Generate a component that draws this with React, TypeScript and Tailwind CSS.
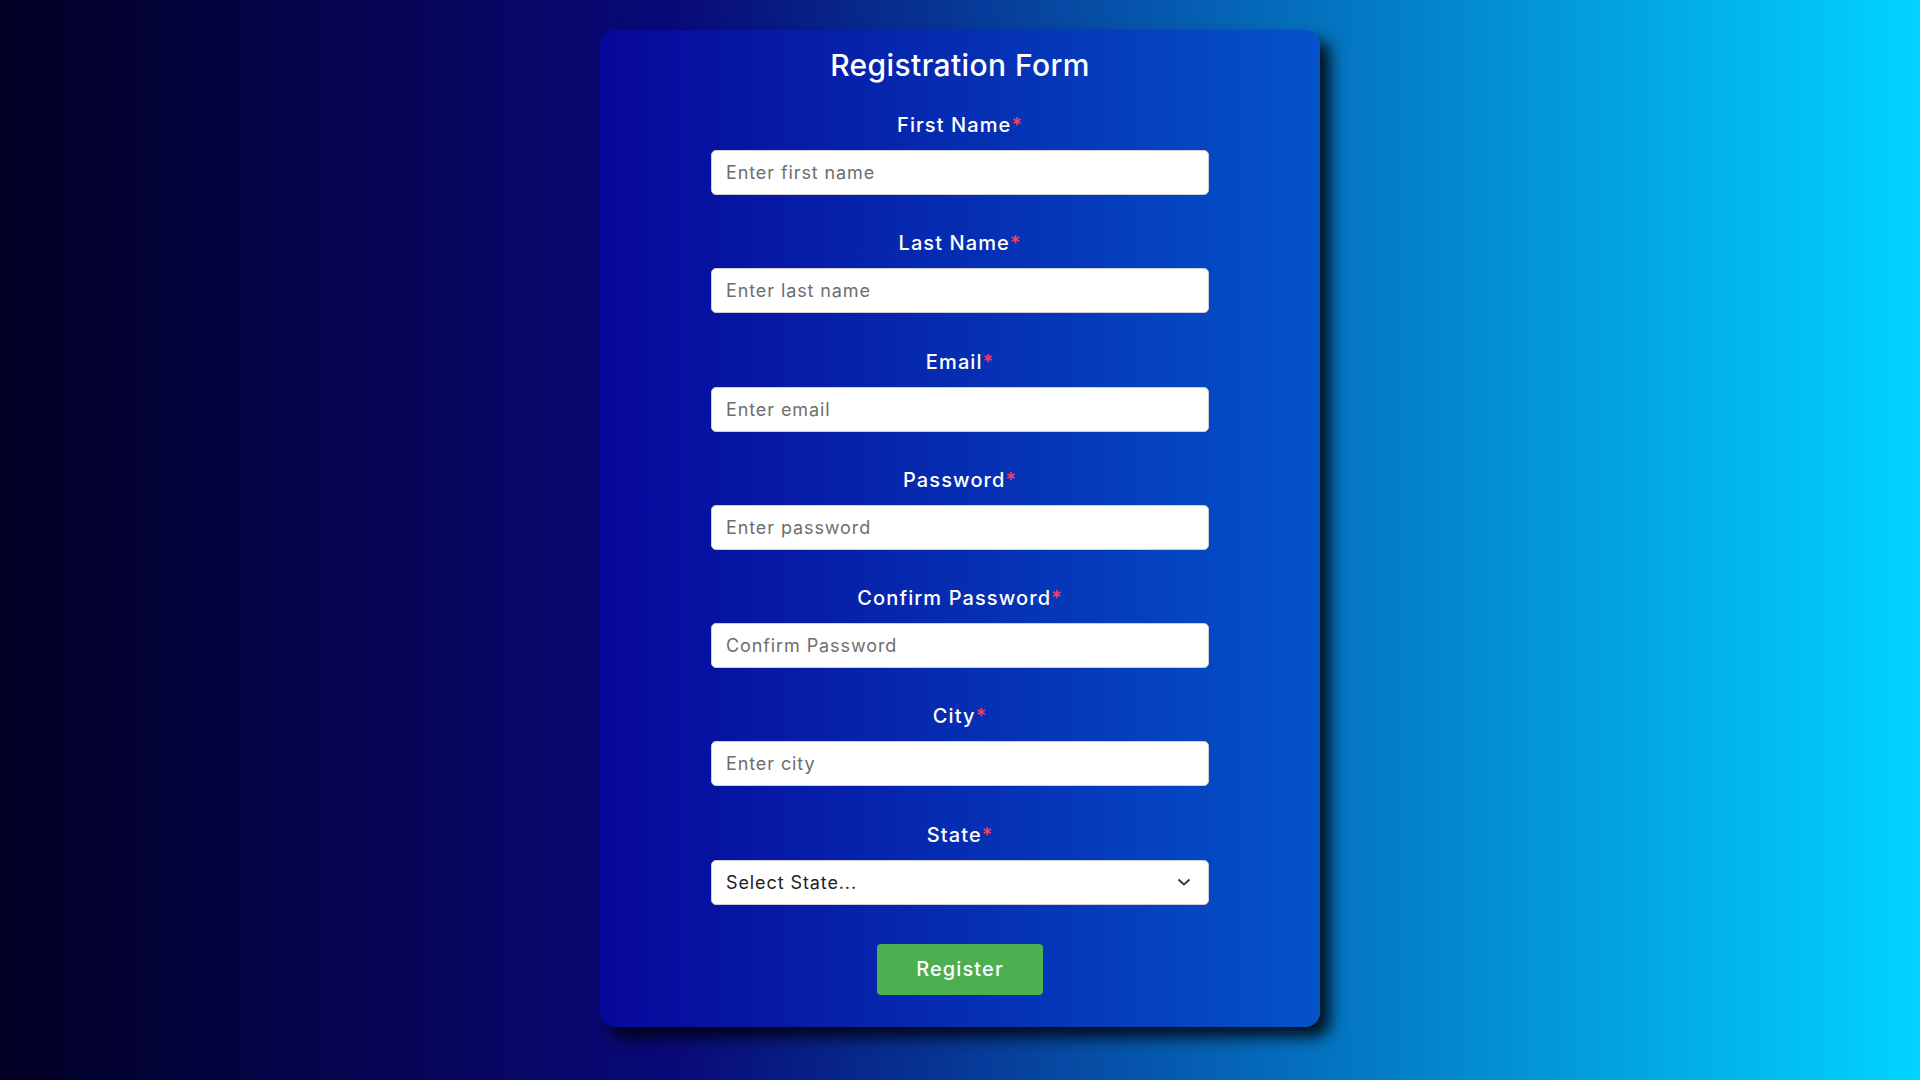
import React from "react";

const fields = [
  { label: "First Name", placeholder: "Enter first name", type: "text" },
  { label: "Last Name", placeholder: "Enter last name", type: "text" },
  { label: "Email", placeholder: "Enter email", type: "email" },
  { label: "Password", placeholder: "Enter password", type: "password" },
  { label: "Confirm Password", placeholder: "Confirm Password", type: "password" },
  { label: "City", placeholder: "Enter city", type: "text" },
];

const Label = ({ text }: { text: string }) => (
  <label className="block text-center text-[20px] leading-[30px] font-medium tracking-[1.1px] text-white">
    {text}
    <span className="text-[#ff3d5e]">*</span>
  </label>
);

export default function App() {
  return (
    <div
      className="min-h-screen w-full flex justify-center items-start pt-[30px] bg-[linear-gradient(90deg,#020024_0%,#090979_35%,#00d4ff_100%)]"
      style={{ fontFamily: "Inter, 'Open Sans', sans-serif" }}
    >
      {/* Card */}
      <form
        className="w-[720px] h-[997px] rounded-[15px] pt-[13px] flex flex-col items-center bg-[linear-gradient(90deg,#07079a_0%,#0453ca_100%)] shadow-[10px_10px_15px_rgba(0,0,0,0.85)]"
        onSubmit={(e) => e.preventDefault()}
      >
        <h2 className="text-[30px] leading-[45px] font-medium tracking-[0.4px] text-white mb-[22px]">
          Registration Form
        </h2>

        <div className="flex flex-col gap-[33.3px]">
          {fields.map((f) => (
            <div key={f.label} className="flex flex-col items-center gap-[10px]">
              <Label text={f.label} />
              <input
                type={f.type}
                placeholder={f.placeholder}
                className="w-[498px] h-[45px] rounded-[5px] border border-[#cfcfcf] bg-white px-[14px] text-[18px] tracking-[0.9px] text-[#222] placeholder:text-[#6e6e6e] outline-none"
              />
            </div>
          ))}

          <div className="flex flex-col items-center gap-[10px]">
            <Label text="State" />
            <div className="relative w-[498px]">
              <select
                defaultValue=""
                className="appearance-none w-[498px] h-[45px] rounded-[5px] border border-[#cfcfcf] bg-white px-[14px] text-[18px] tracking-[0.9px] text-[#222] outline-none"
              >
                <option value="" disabled>
                  Select State...
                </option>
                <option>Maharashtra</option>
                <option>Karnataka</option>
                <option>Gujarat</option>
              </select>
              <svg
                className="absolute right-[18px] top-1/2 -translate-y-1/2 pointer-events-none"
                width="14"
                height="8"
                viewBox="0 0 14 8"
                fill="none"
              >
                <path d="M1.5 1.5 L7 6.5 L12.5 1.5" stroke="#333" strokeWidth="1.8" />
              </svg>
            </div>
          </div>
        </div>

        <button
          type="submit"
          className="mt-[39px] w-[166px] h-[51px] rounded-[4px] bg-[#4caf50] text-white text-[20px] font-medium tracking-[1.1px]"
        >
          Register
        </button>
      </form>
    </div>
  );
}
